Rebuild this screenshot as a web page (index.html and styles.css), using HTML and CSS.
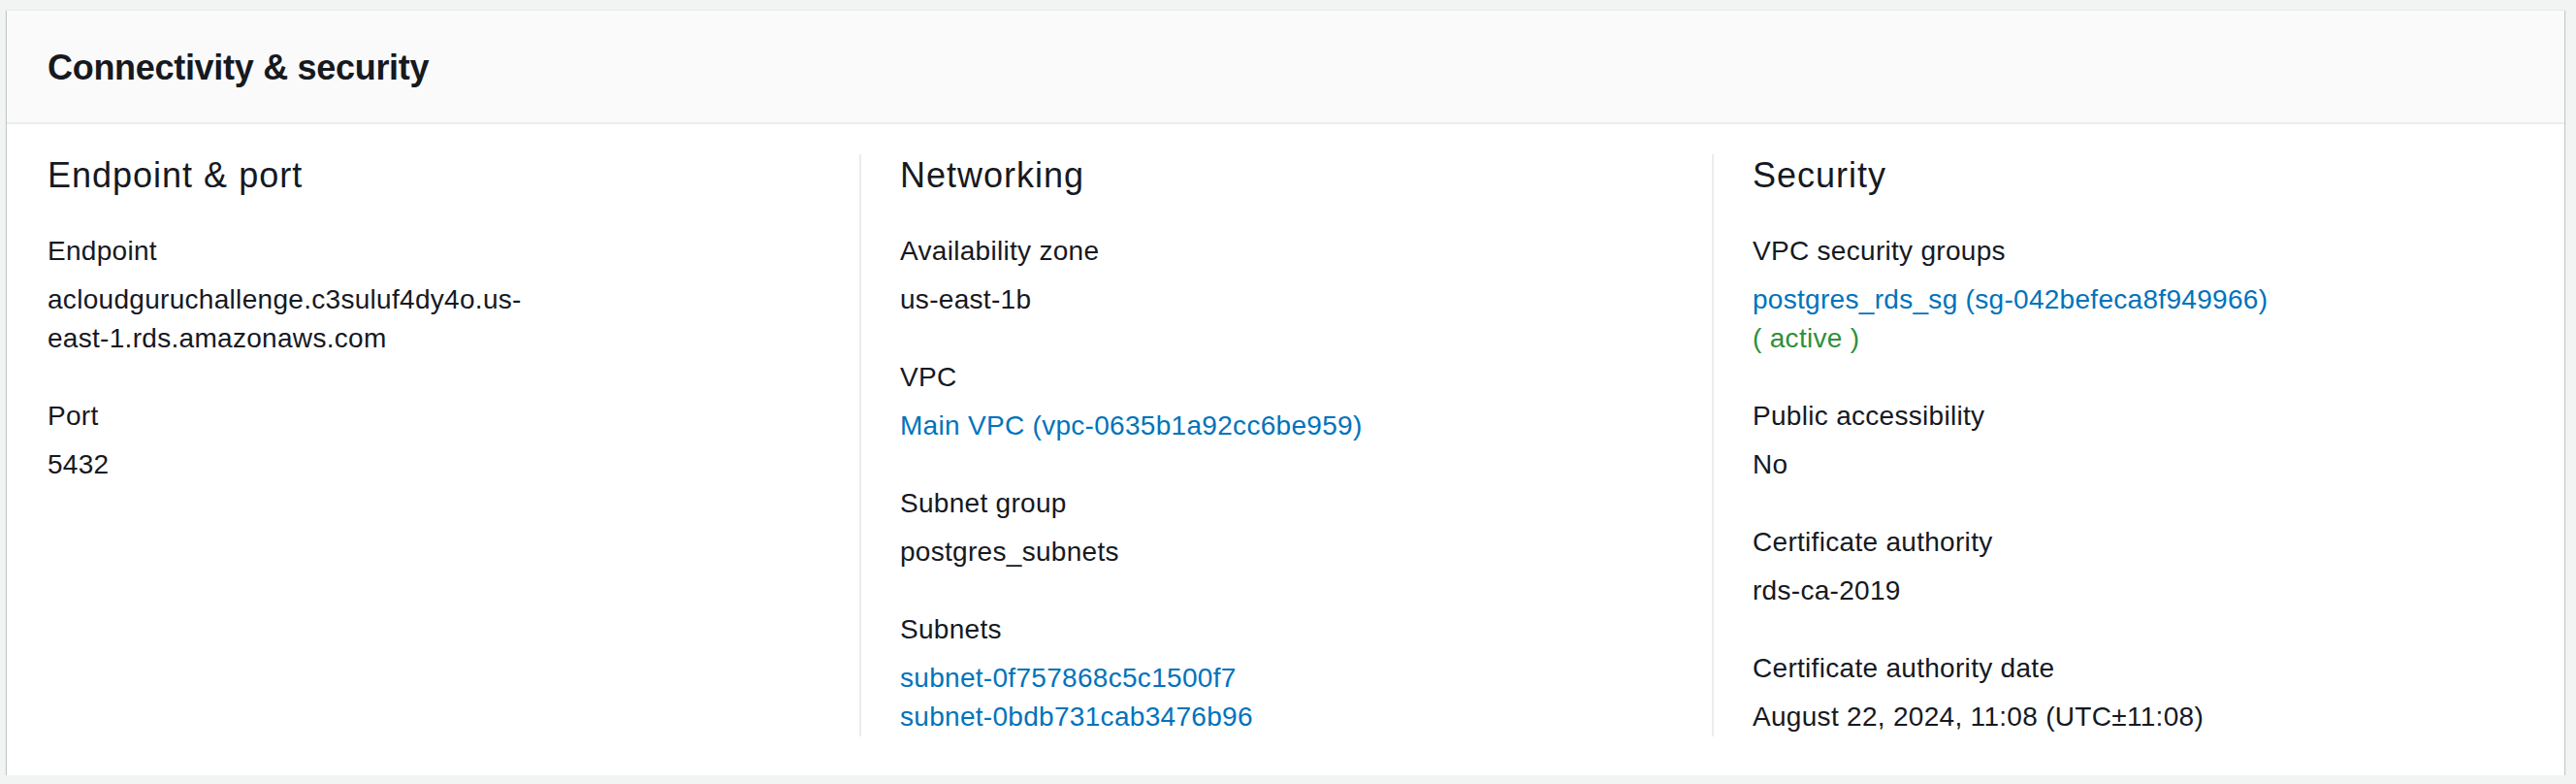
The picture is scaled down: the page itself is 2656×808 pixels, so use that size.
FILE: index.html
```html
<!DOCTYPE html>
<html lang="en">
<head>
<meta charset="utf-8">
<title>Connectivity &amp; security</title>
<link rel="stylesheet" href="styles.css">
</head>
<body>
<div class="card">
  <div class="card-header">
    <h2 class="card-title">Connectivity &amp; security</h2>
  </div>
  <div class="card-body">
    <div class="column">
      <h3 class="column-title">Endpoint &amp; port</h3>
      <div class="pair">
        <div class="label">Endpoint</div>
        <div class="value">acloudguruchallenge.c3suluf4dy4o.us-<span class="nowrap">east-1.rds.amazonaws.com</span></div>
      </div>
      <div class="pair">
        <div class="label">Port</div>
        <div class="value">5432</div>
      </div>
    </div>
    <div class="column">
      <h3 class="column-title">Networking</h3>
      <div class="pair">
        <div class="label">Availability zone</div>
        <div class="value">us-east-1b</div>
      </div>
      <div class="pair">
        <div class="label">VPC</div>
        <div class="value"><a class="link" href="#">Main VPC (vpc-0635b1a92cc6be959)</a></div>
      </div>
      <div class="pair">
        <div class="label">Subnet group</div>
        <div class="value">postgres_subnets</div>
      </div>
      <div class="pair">
        <div class="label">Subnets</div>
        <div class="value">
          <div><a class="link" href="#">subnet-0f757868c5c1500f7</a></div>
          <div><a class="link" href="#">subnet-0bdb731cab3476b96</a></div>
        </div>
      </div>
    </div>
    <div class="column">
      <h3 class="column-title">Security</h3>
      <div class="pair">
        <div class="label">VPC security groups</div>
        <div class="value">
          <div><a class="link" href="#">postgres_rds_sg (sg-042befeca8f949966)</a></div>
          <div class="status-active">( active )</div>
        </div>
      </div>
      <div class="pair">
        <div class="label">Public accessibility</div>
        <div class="value">No</div>
      </div>
      <div class="pair">
        <div class="label">Certificate authority</div>
        <div class="value">rds-ca-2019</div>
      </div>
      <div class="pair">
        <div class="label">Certificate authority date</div>
        <div class="value">August 22, 2024, 11:08 (UTC±11:08)</div>
      </div>
    </div>
  </div>
</div>
</body>
</html>
```
FILE: styles.css
```css
html, body {
  margin: 0;
  padding: 0;
}

body {
  background: #f2f3f3;
  font-family: "Liberation Sans", Arial, sans-serif;
  color: #16191f;
  padding: 10px 12px 0 7px;
}

.card {
  background: #ffffff;
  border-top: 1px solid #eaeded;
  box-shadow: 0 1px 1px 0 rgba(0, 28, 36, 0.3),
              1px 1px 1px 0 rgba(0, 28, 36, 0.15),
              -1px 1px 1px 0 rgba(0, 28, 36, 0.15);
}

.card-header {
  background: #fafafa;
  border-bottom: 2px solid #eaeded;
  padding: 37px 40px 34px 42px;
}

.card-title {
  margin: 0;
  font-size: 36px;
  line-height: 44px;
  font-weight: 700;
  letter-spacing: -0.3px;
}

.card-body {
  display: grid;
  grid-template-columns: repeat(3, 1fr);
  padding: 31px 0 40px;
}

.column {
  padding: 0 40px 0 42px;
  display: flex;
  flex-direction: column;
  gap: 40px;
  min-width: 0;
}

.column + .column {
  border-left: 2px solid #eaeded;
  padding-left: 40px;
}

.column-title {
  margin: 0 0 -4px;
  font-size: 36px;
  line-height: 44px;
  font-weight: 400;
  letter-spacing: 1px;
}

.pair {
  display: flex;
  flex-direction: column;
  gap: 10px;
  font-size: 28px;
  line-height: 40px;
  letter-spacing: 0.3px;
}

.value {
  overflow-wrap: break-word;
}

.nowrap {
  white-space: nowrap;
}

.link {
  color: #0073bb;
  text-decoration: none;
}

.status-active {
  color: #2f8f3a;
}
```
